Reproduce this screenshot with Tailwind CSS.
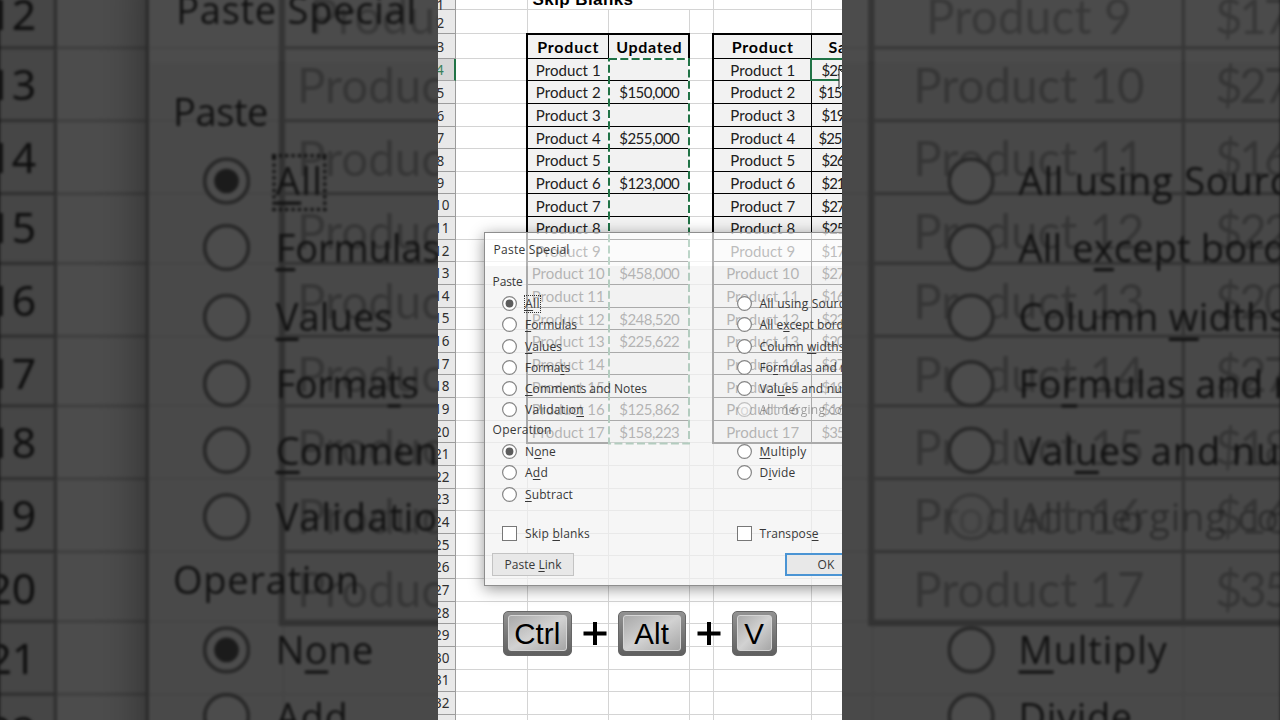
<!DOCTYPE html>
<html lang="en">
<head>
<meta charset="utf-8">
<title>Skip Blanks</title>
<script src="https://cdn.jsdelivr.net/npm/@tailwindcss/browser@4"></script>
</head>
<body class="overflow-hidden bg-black">
<main class="relative h-[720px] w-[1280px] overflow-hidden bg-[#4b4b4b]">
  <div id="backdrop" class="absolute top-0 left-[438px] h-[720px] w-[404px] scale-[3.1683] blur-[0.45px]" aria-hidden="true"></div>
  <div class="absolute inset-0 bg-black/70"></div>
  <div id="stage" class="absolute top-0 left-[438px] h-[720px] w-[404px] overflow-hidden bg-white">
    <section id="scene" class="relative h-[720px] w-[404px] overflow-hidden bg-white">
      <div id="sheet" class="-ml-3 grid w-[500px] grid-cols-[29.5px_72px_81px_81px_24px_98px_114.5px] grid-rows-[10.3px_24.1px_24.3px_repeat(30,22.63px)]"></div>

      <svg class="absolute top-[64px] left-[400px] h-[28px] w-[18px]" viewBox="0 0 18 28"><path d="M1 5V25L6 20L10 28L13 26L9.500 19H16Z" fill="#fff" stroke="#222" stroke-width="1"/></svg>

      <div class="absolute top-[232px] left-[46px] h-[353.500px] w-[420px] border border-[#8e8e8e] text-[12px] leading-4 text-[#383838] shadow-[0_3px_14px_rgba(0,0,0,0.42)]" style="font-family:'Open Sans','Noto Sans',sans-serif">
        <div class="flex h-[33px] items-center bg-white/70 pl-[8.600px]"><span data-w="76">Paste Special</span></div>
        <div class="h-[318.500px] bg-[#f2f2f2]/70">
        <div class="flex h-[27px] items-end pb-[3.500px] pl-[7.600px]"><span data-w="30">Paste</span></div>
        <div id="paste" class="grid auto-rows-[21.25px] grid-cols-[234.500px_1fr] pl-[17px]"></div>
        <div class="flex h-[20.500px] items-center pb-px pl-[7.600px]"><span data-w="59">Operation</span></div>
        <div id="operation" class="grid auto-rows-[21.25px] grid-cols-[234.500px_1fr] pl-[17px]"></div>
        <div class="mt-[18px] grid h-[21px] grid-cols-[234.500px_1fr] items-center pl-[17px]">
          <div class="flex items-center gap-[8px]"><i class="size-[15px] border border-[#777] bg-white"></i><span class="pt-px" data-w="65">Skip <u class="underline-offset-2">b</u>lanks</span></div>
          <div class="flex items-center gap-[8px]"><i class="size-[15px] border border-[#777] bg-white"></i><span class="pt-px" data-w="59">Transpos<u class="underline-offset-2">e</u></span></div>
        </div>
        <div class="flex pt-[9px] pl-[7px]">
          <div class="flex h-[23.500px] w-[82px] items-center justify-center border border-[#c3c3c3] bg-[#e8e8e8]"><span data-w="57">Paste <u class="underline-offset-2">L</u>ink</span></div>
          <div class="ml-[211px] flex h-[23.500px] w-[82px] items-center justify-center border-2 border-[#4a94d4] bg-[#e8e8e8]"><span data-w="17">OK</span></div>
        </div>
        </div>
      </div>
    </section>
    <div class="absolute top-[611px] left-[65px] flex h-[45px] items-center text-[29.500px] text-black" style="font-family:'Liberation Sans',Arial,sans-serif">
      <div class="h-[45px] w-[68.500px] rounded-[5px] border border-[#666] bg-linear-to-b from-[#929292] to-[#606060] px-[4px] pt-[3px] pb-[4px]"><div class="flex h-full items-center justify-center rounded-[3px] border border-[#d5d5d5] bg-linear-to-br from-[#a9a9a9] via-[#d2d2d2] to-[#a6a6a6] pt-px leading-none"><span data-w="46">Ctrl</span></div></div>
      <svg class="mx-[11px] size-[24px]" viewBox="0 0 24 24"><path d="M12 0V23M0.500 11.500H23.500" stroke="#000" stroke-width="4"/></svg>
      <div class="h-[45px] w-[68.500px] rounded-[5px] border border-[#666] bg-linear-to-b from-[#929292] to-[#606060] px-[4px] pt-[3px] pb-[4px]"><div class="flex h-full items-center justify-center rounded-[3px] border border-[#d5d5d5] bg-linear-to-br from-[#a9a9a9] via-[#d2d2d2] to-[#a6a6a6] pt-px leading-none"><span data-w="35">Alt</span></div></div>
      <svg class="mx-[10.800px] size-[24px]" viewBox="0 0 24 24"><path d="M12 0V23M0.500 11.500H23.500" stroke="#000" stroke-width="4"/></svg>
      <div class="h-[45px] w-[45px] rounded-[5px] border border-[#666] bg-linear-to-b from-[#929292] to-[#606060] px-[4px] pt-[3px] pb-[4px]"><div class="flex h-full items-center justify-center rounded-[3px] border border-[#d5d5d5] bg-linear-to-br from-[#a9a9a9] via-[#d2d2d2] to-[#a6a6a6] pt-px leading-none">V</div></div>
    </div>
  </div>
</main>
<script>
const sales = ['25','15','19','25','26','21','27','25','17','27','16','22','20','27','18','16','35'];
const updated = {2:'$150,000',4:'$255,000',6:'$123,000',10:'$458,000',12:'$248,520',13:'$225,622',16:'$125,862',17:'$158,223'};
const at = (r, c) => `style="grid-row:${r};grid-column:${c};font-family:Lato,'Open Sans',sans-serif"`;
let h = '';
for (let r = 1; r <= 33; r++) {
  const cls = r === 4
    ? 'flex items-center justify-center border-r-2 border-b border-r-[#217346] border-b-[#a5a5a5] bg-[#d6d6d6] pt-[2px] text-[13.5px] leading-none text-[#3a805a]'
    : r > 9
    ? 'flex items-center justify-center border-r border-b border-[#9c9c9c] bg-[#e9e9e9] pt-[1.5px] pl-[3px] text-[13.5px] leading-none text-[#303030]'
    : 'flex items-center justify-center border-r border-b border-[#9c9c9c] bg-[#e9e9e9] pt-[3px] text-[13.5px] leading-none text-[#303030]';
  h += `<div class="${cls}" style="grid-row:${r};grid-column:1;font-family:'Noto Sans',sans-serif">${r}</div>`;
  const table = r >= 3 && r <= 20, n = r - 3;
  for (let c = 2; c <= 7; c++) {
    if (table && c !== 2 && c !== 5) {
      let t = '', cls = 'flex items-center justify-center border-r border-b border-black bg-[#f2f2f2] pt-[1.5px] pl-[1.5px] text-[15px] leading-none text-[#202020]';
      if (n === 0) {
        cls = 'flex items-center justify-center border-r border-b border-black bg-[#f2f2f2] pt-[2px] pl-[1.5px] text-[16px] leading-none font-bold text-black';
        t = c === 4 ? '<span data-w="66">Updated</span>' : c === 7 ? '<span data-w="40">Sales</span>' : '<span data-w="62">Product</span>';
        if (c === 7) cls = 'flex items-center justify-start border-b border-black bg-[#f2f2f2] pt-[2px] pl-[17px] text-[16px] leading-none font-bold text-black';
      } else if (c === 3 || c === 6) t = `<span data-w="${n > 9 ? 73 : 65}">Product ${n}</span>`;
      else if (c === 4) t = updated[n] ? `<span data-w="60">${updated[n]}</span>` : '';
      else {
        const wide = n === 2 || n === 4;
        cls = wide ? 'flex items-center justify-start border-b border-black bg-[#f2f2f2] pt-[1.5px] pl-[7px] text-[15px] leading-none text-[#202020]'
                   : 'flex items-center justify-start border-b border-black bg-[#f2f2f2] pt-[1.5px] pl-[10px] text-[15px] leading-none text-[#202020]';
        t = `<span data-w="23">$${sales[n-1]}</span>`;
      }
      h += `<div class="${cls}" ${at(r, c)}>${t}</div>`;
    } else if (r === 1 && c === 3) {
      h += `<div class="flex items-end border-b border-[#d4d4d4] pb-px pl-[5px] text-[17px] leading-none font-bold whitespace-nowrap text-black" style="grid-row:1;grid-column:3/5;font-family:'Liberation Sans',Arial,sans-serif"><span data-w="101">Skip Blanks</span></div>`;
      c++;
    } else h += `<div class="border-r border-b border-[#d4d4d4]" ${at(r, c)}></div>`;
  }
}
h += '<div class="-mt-[1.2px] -mb-px -ml-[1.8px] border-2 border-black" style="grid-row:3/21;grid-column:3/5"></div>';
h += '<div class="-mt-[1.2px] -mb-px -ml-[1.8px] border-2 border-black" style="grid-row:3/21;grid-column:6/8"></div>';
h += '<div class="-mt-px -ml-[2px] border-2 border-[#217346]" style="grid-row:4;grid-column:7"></div>';
h += '<svg class="-mt-px h-[386px] w-[82px] overflow-visible" viewBox="0 0 82 386" style="grid-row:4/21;grid-column:4"><g fill="none" stroke-width="2"><rect x="0" y="1" width="80" height="384.500" stroke="#fff"/><rect x="0" y="1" width="80" height="384.500" stroke="#217346" stroke-dasharray="8 3.300"/></g></svg>';
document.getElementById('sheet').innerHTML = h;

const radio = (label, w, on, off) => label ? `<div class="${off ? 'flex items-center gap-[8px] whitespace-nowrap opacity-45' : 'flex items-center gap-[8px] whitespace-nowrap'}"><svg class="size-[15px] shrink-0" viewBox="0 0 15 15"><circle cx="7.500" cy="7.500" r="6.900" fill="#fff" stroke="#858585" stroke-width="1.200"/>${on ? '<circle cx="7.500" cy="7.500" r="3.900" fill="#5c5c5c"/>' : ''}</svg><span data-w="${w}" class="${label === '<u>A</u>ll' ? 'underline-offset-2 outline-1 outline-dotted outline-[#333]' : 'pt-px underline-offset-2'}">${label}</span></div>` : '<div></div>';
document.getElementById('paste').innerHTML = [
  ['<u>A</u>ll',15,1],['All using Source t<u>h</u>eme',133],
  ['<u>F</u>ormulas',52],['All e<u>x</u>cept borders',102],
  ['<u>V</u>alues',37],['Column <u>w</u>idths',85],
  ['Forma<u>t</u>s',45],['Fo<u>r</u>mulas and number formats',173],
  ['<u>C</u>omments and Notes',122],['Val<u>u</u>es and number formats',163],
  ['Validatio<u>n</u>',59],['All merging conditional formats',183,0,1]
].map(a => radio(...a)).join('');
document.getElementById('operation').innerHTML = [
  ['N<u>o</u>ne',31,1],['<u>M</u>ultiply',47],['A<u>d</u>d',23],['D<u>i</u>vide',36],['<u>S</u>ubtract',48]
].map(a => radio(...a)).join('');

/* Track each label to its set width, measured with the element's own computed font. */
function fit() {
  const ctx = document.createElement('canvas').getContext('2d');
  document.querySelectorAll('[data-w]').forEach(e => {
    const s = getComputedStyle(e);
    ctx.font = `${s.fontWeight} ${s.fontSize} ${s.fontFamily}`;
    e.style.letterSpacing = (e.dataset.w - ctx.measureText(e.textContent).width) / e.textContent.length + 'px';
  });
}
const copy = document.getElementById('scene').cloneNode(true);
copy.removeAttribute('id');
document.getElementById('backdrop').append(copy);
fit();
addEventListener('load', () => { fit(); setTimeout(fit, 50); });
</script>
</body>
</html>
